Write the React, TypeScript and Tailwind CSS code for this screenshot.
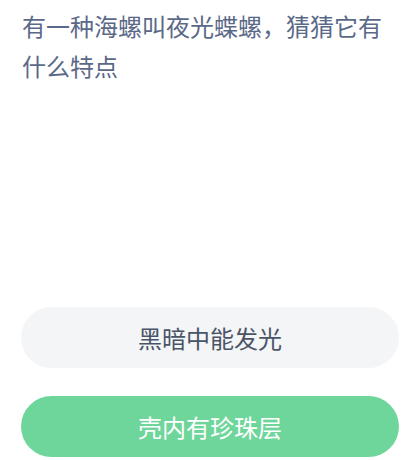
import React from 'react';

const OPTIONS = [
  { label: '黑暗中能发光', picked: false },
  { label: '壳内有珍珠层', picked: true },
];

const App: React.FC = () => {
  return (
    <div
      className="w-[409px] h-[460px] bg-white flex flex-col pl-[21px] pr-[10px] pt-[6px] overflow-hidden"
      style={{ fontFamily: "'Noto Sans CJK SC', 'Noto Sans', sans-serif" }}
    >
      <p className="text-[24px] leading-[40px] text-[#5a6988] pr-[12px] pl-[1px]">
        有一种海螺叫夜光蝶螺，猜猜它有什么特点
      </p>

      <div className="mt-auto mb-[3px] flex flex-col gap-[28px]">
        {OPTIONS.map((o) => (
          <button
            key={o.label}
            className={`h-[61px] w-full rounded-full flex items-center justify-center text-[24px] ${
              o.picked ? 'bg-[#6fd69b] text-white' : 'bg-[#f3f5f7] text-[#4a5466]'
            }`}
          >
            {o.label}
          </button>
        ))}
      </div>
    </div>
  );
};

export default App;
